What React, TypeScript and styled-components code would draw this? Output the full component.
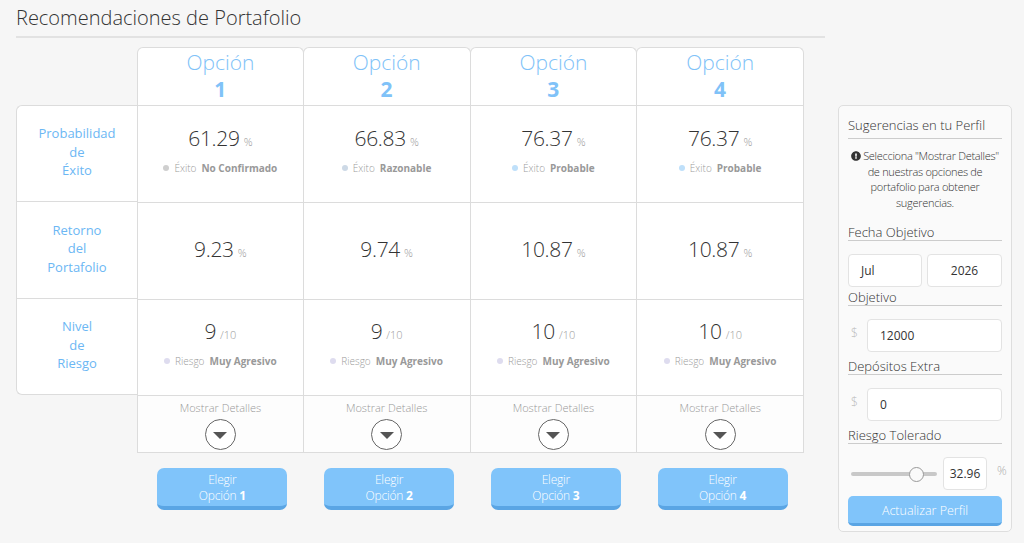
import styled, {createGlobalStyle} from "styled-components";
import {FaExclamationCircle} from "react-icons/fa";

const GlobalStyle = createGlobalStyle`
    body {
        margin: 0;
        background: #f6f6f6;
        font-family: "Open Sans", "Liberation Sans", sans-serif;
        color: #333;
    }
`

const Page = styled.div`
    display: flex;
    flex-direction: row;
    align-items: flex-start;
    padding-left: 16px;
    gap: 13px;
`

const Main = styled.div`
    display: flex;
    flex-direction: column;
    width: 809px;
`

const Title = styled.h1`
    margin: 0;
    padding-top: 6px;
    height: 30px;
    font-size: 20px;
    line-height: 24px;
    font-weight: 300;
    color: #333;
    border-bottom: 2px solid #e2e2e2;
`

const Grid = styled.div`
    display: grid;
    grid-template-columns: 121px repeat(4, 1fr);
    grid-template-rows: 58px 97px 97px 96px 58px;
    width: 788px;
    margin-top: 9px;
`

const Blank = styled.div``

const HeaderCell = styled.div<{ $first?: boolean }>`
    display: flex;
    flex-direction: column;
    align-items: center;
    justify-content: center;
    padding-bottom: 2px;
    background: #fff;
    border: 1px solid #dcdcdc;
    border-bottom: none;
    border-radius: 6px 6px 0 0;
    margin-left: ${({$first}) => $first ? "0" : "-1px"};
    color: #80c2f8;
    font-size: 21px;
    line-height: 27px;
`

const HeaderWord = styled.span`
    font-weight: 300;
`

const HeaderNumber = styled.span`
    font-weight: 700;
`

const LabelCell = styled.div<{ $top?: boolean; $bottom?: boolean }>`
    display: flex;
    align-items: center;
    justify-content: center;
    text-align: center;
    background: #fff;
    border-left: 1px solid #dcdcdc;
    border-top: ${({$top}) => $top ? "1px solid #dcdcdc" : "none"};
    border-bottom: 1px solid #dcdcdc;
    border-radius: ${({$top, $bottom}) => $top ? "6px 0 0 0" : $bottom ? "0 0 0 6px" : "0"};
    color: #6cb7f4;
    font-size: 13px;
    line-height: 18.5px;
    padding-bottom: 3px;
`

const ValueCell = styled.div<{ $first?: boolean }>`
    display: flex;
    flex-direction: column;
    align-items: center;
    justify-content: center;
    gap: 5px;
    background: #fff;
    border-top: 1px solid #dcdcdc;
    border-right: 1px solid #dcdcdc;
    border-left: ${({$first}) => $first ? "1px solid #dcdcdc" : "none"};
`

const Value = styled.div`
    font-size: 21px;
    line-height: 28px;
    font-weight: 300;
    color: #333;
    letter-spacing: -0.3px;
`

const Unit = styled.span`
    font-size: 11px;
    color: #9a9a9a;
    margin-left: 4px;
    letter-spacing: 0;
`

const Status = styled.div`
    display: flex;
    align-items: center;
    gap: 5px;
    margin-bottom: 10px;
    font-size: 10px;
    line-height: 14px;
    font-weight: 300;
    color: #9c9c9c;

    b {
        color: #999;
        font-weight: 700;
    }
`

const Dot = styled.span<{ $color: string }>`
    width: 6px;
    height: 6px;
    border-radius: 50%;
    background: ${({$color}) => $color};
`

const DetailsCell = styled.div<{ $first?: boolean }>`
    display: flex;
    flex-direction: column;
    align-items: center;
    padding-top: 4px;
    gap: 4px;
    background: #fdfdfd;
    border-top: 1px solid #dcdcdc;
    border-bottom: 1px solid #dcdcdc;
    border-right: 1px solid #dcdcdc;
    border-left: ${({$first}) => $first ? "1px solid #dcdcdc" : "none"};
    font-size: 11px;
    font-weight: 300;
    color: #999;
`

const CaretButton = styled.button`
    display: flex;
    align-items: center;
    justify-content: center;
    width: 31px;
    height: 31px;
    padding: 0;
    border-radius: 50%;
    border: 1px solid #666;
    background: #fff;

    &::after {
        content: "";
        margin-top: 2px;
        border-left: 7px solid transparent;
        border-right: 7px solid transparent;
        border-top: 7px solid #555;
    }
`

const ButtonRow = styled.div`
    display: grid;
    grid-template-columns: 121px repeat(4, 1fr);
    width: 788px;
    margin-top: 15px;
`

const ChooseButton = styled.button`
    justify-self: center;
    margin-left: 4px;
    width: 130px;
    height: 42px;
    border: none;
    border-bottom: 4px solid #5aa5e4;
    border-radius: 7px;
    background: #80c4fa;
    color: #fff;
    font-family: "Open Sans", "Liberation Sans", sans-serif;
    font-size: 12px;
    font-weight: 300;
    line-height: 16px;
    padding: 2px 0 0;
    letter-spacing: -0.2px;

    b {
        font-weight: 700;
    }
`

const Sidebar = styled.aside`
    display: flex;
    flex-direction: column;
    width: 154px;
    margin-top: 105px;
    padding: 9px 9px 5px;
    background: #fafafa;
    border: 1px solid #dedede;
    border-radius: 5px;
    font-weight: 300;
`

const SideTitle = styled.div`
    font-size: 13px;
    line-height: 20px;
    padding-bottom: 3px;
    border-bottom: 1px solid #ccc;
`

const Note = styled.p`
    margin: 9px 0 0;
    text-align: center;
    font-size: 11px;
    line-height: 15.5px;
    color: #333;
    letter-spacing: -0.3px;

    svg {
        vertical-align: -1px;
        margin-right: 2px;
    }
`

const SectionLabel = styled.div<{ $gap: number }>`
    margin-top: ${({$gap}) => $gap}px;
    font-size: 13px;
    line-height: 16px;
    border-bottom: 1px solid #ccc;
`

const FieldRow = styled.div`
    display: flex;
    align-items: center;
    gap: 5px;
    margin-top: 13px;
`

const Prefix = styled.span`
    width: 11px;
    padding-left: 3px;
    margin-top: -6px;
    font-size: 12px;
    color: #bbb;
`

const Input = styled.div<{ $align?: string; $width?: string }>`
    display: flex;
    align-items: center;
    justify-content: ${({$align}) => $align || "flex-start"};
    box-sizing: border-box;
    width: ${({$width}) => $width || "auto"};
    flex: ${({$width}) => $width ? "none" : "1"};
    height: 33px;
    padding: 0 12px;
    background: #fff;
    border: 1px solid #e3e3e3;
    border-radius: 4px;
    font-size: 12px;
    font-weight: 400;
    color: #333;
`

const SliderRow = styled.div`
    display: flex;
    align-items: center;
    margin-top: 13px;
`

const SliderTrack = styled.div`
    position: relative;
    flex-shrink: 0;
    width: 86px;
    height: 4px;
    margin: 0 6px 0 3px;
    border-radius: 2px;
    background: #c8c8c8;
`

const SliderThumb = styled.span`
    position: absolute;
    left: 58px;
    top: -5px;
    width: 13px;
    height: 13px;
    border-radius: 50%;
    background: #fafafa;
    border: 1px solid #999;
`

const Percent = styled.span`
    flex-shrink: 0;
    margin-left: 10px;
    margin-top: -6px;
    font-size: 12px;
    color: #aaa;
`

const UpdateButton = styled.button`
    margin-top: 6px;
    height: 30px;
    border: none;
    border-bottom: 3px solid #5aa5e4;
    border-radius: 5px;
    background: #80c4fa;
    color: #fff;
    font-family: "Open Sans", "Liberation Sans", sans-serif;
    font-size: 12.5px;
    font-weight: 300;
    padding: 1px 0 0;
`

const options = [
	{n: 1, prob: "61.29", probLabel: "No Confirmado", probDot: "#cfcfcf", ret: "9.23", risk: 9},
	{n: 2, prob: "66.83", probLabel: "Razonable", probDot: "#cdd9e6", ret: "9.74", risk: 9},
	{n: 3, prob: "76.37", probLabel: "Probable", probDot: "#bfe0fa", ret: "10.87", risk: 10},
	{n: 4, prob: "76.37", probLabel: "Probable", probDot: "#bfe0fa", ret: "10.87", risk: 10},
]

export default function App() {
	return (
		<>
			<GlobalStyle/>
			<Page>
				<Main>
					<Title>Recomendaciones de Portafolio</Title>
					<Grid>
						<Blank/>
						{options.map(o => (
							<HeaderCell key={o.n} $first={o.n === 1}>
								<HeaderWord>Opción</HeaderWord>
								<HeaderNumber>{o.n}</HeaderNumber>
							</HeaderCell>
						))}

						<LabelCell $top>Probabilidad<br/>de<br/>Éxito</LabelCell>
						{options.map(o => (
							<ValueCell key={o.n} $first={o.n === 1}>
								<Value>{o.prob}<Unit>%</Unit></Value>
								<Status><Dot $color={o.probDot}/>Éxito <b>{o.probLabel}</b></Status>
							</ValueCell>
						))}

						<LabelCell>Retorno<br/>del<br/>Portafolio</LabelCell>
						{options.map(o => (
							<ValueCell key={o.n} $first={o.n === 1}>
								<Value>{o.ret}<Unit>%</Unit></Value>
							</ValueCell>
						))}

						<LabelCell $bottom>Nivel<br/>de<br/>Riesgo</LabelCell>
						{options.map(o => (
							<ValueCell key={o.n} $first={o.n === 1}>
								<Value>{o.risk}<Unit>/10</Unit></Value>
								<Status><Dot $color="#dedcef"/>Riesgo <b>Muy Agresivo</b></Status>
							</ValueCell>
						))}

						<Blank/>
						{options.map(o => (
							<DetailsCell key={o.n} $first={o.n === 1}>
								Mostrar Detalles
								<CaretButton aria-label="Mostrar Detalles"/>
							</DetailsCell>
						))}
					</Grid>
					<ButtonRow>
						<Blank/>
						{options.map(o => (
							<ChooseButton key={o.n}>Elegir<br/>Opción <b>{o.n}</b></ChooseButton>
						))}
					</ButtonRow>
				</Main>

				<Sidebar>
					<SideTitle>Sugerencias en tu Perfil</SideTitle>
					<Note>
						<FaExclamationCircle size={10}/>Selecciona "Mostrar Detalles" de nuestras opciones de portafolio para obtener sugerencias.
					</Note>

					<SectionLabel $gap={14}>Fecha Objetivo</SectionLabel>
					<FieldRow>
						<Input $width="74px">Jul</Input>
						<Input $align="center">2026</Input>
					</FieldRow>

					<SectionLabel $gap={2}>Objetivo</SectionLabel>
					<FieldRow>
						<Prefix>$</Prefix>
						<Input>12000</Input>
					</FieldRow>

					<SectionLabel $gap={6}>Depósitos Extra</SectionLabel>
					<FieldRow>
						<Prefix>$</Prefix>
						<Input>0</Input>
					</FieldRow>

					<SectionLabel $gap={6}>Riesgo Tolerado</SectionLabel>
					<SliderRow>
						<SliderTrack><SliderThumb/></SliderTrack>
						<Input $width="44px" $align="center" style={{padding: 0}}>32.96</Input>
						<Percent>%</Percent>
					</SliderRow>

					<UpdateButton>Actualizar Perfil</UpdateButton>
				</Sidebar>
			</Page>
		</>
	)
}
